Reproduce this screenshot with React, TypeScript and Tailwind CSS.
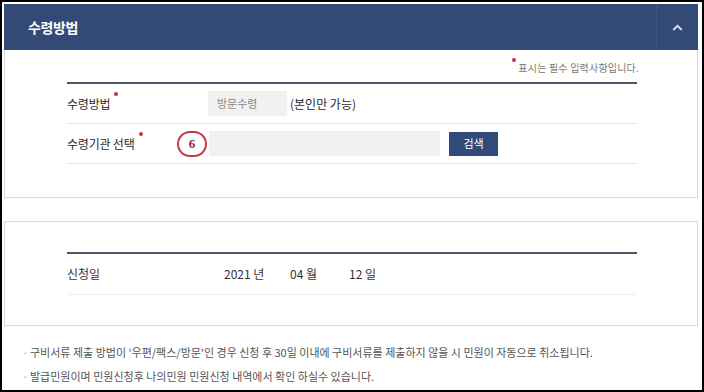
import React from 'react';

const FONT = "font-['Malgun_Gothic','Noto_Sans_CJK_KR',sans-serif]";

const Req = () => (
  <span className="absolute -top-[3px] -right-[8px] w-[4px] h-[4px] rounded-full bg-[#d02c3a]" />
);

const FieldRow = ({ label, children }: { label: string; children: React.ReactNode }) => (
  <div className="flex items-center h-[40px] border-b border-[#e6e6e6]">
    <div className="w-[110px] text-[12px] text-[#2a2a2a] tracking-[-0.2px]">
      <span className="relative">
        {label}
        <Req />
      </span>
    </div>
    {children}
  </div>
);

const App: React.FC = () => {
  return (
    <div className={`w-[704px] h-[392px] bg-white border-2 border-black p-[2px] pr-[4px] overflow-hidden ${FONT}`}>
      {/* 수령방법 패널 헤더 */}
      <div className="flex items-center h-[46px] bg-[#344a76]">
        <h2 className="flex-1 pl-[24px] text-[14px] font-bold text-white tracking-[-0.4px]">수령방법</h2>
        <button className="w-[42px] h-full border-l border-[#3f5684] flex items-center justify-center">
          <svg width="11" height="7" viewBox="0 0 11 7" fill="none">
            <path d="M1.2 6 L5.5 1.8 L9.8 6" stroke="#d5deee" strokeWidth="1.8" />
          </svg>
        </button>
      </div>

      <div className="h-[148px] border border-t-0 border-[#dadada] flex flex-col">
        <div className="h-[32px] flex items-center justify-end pr-[58px] pt-[2px] text-[10px] text-[#777] tracking-[0.2px]">
          <span className="relative">
            <span className="absolute -left-[6px] -top-[2px] w-[4px] h-[4px] rounded-full bg-[#d02c3a]" />
            표시는 필수 입력사항입니다.
          </span>
        </div>
        <div className="ml-[62px] w-[570px] border-t-2 border-[#4d5566]">
          <FieldRow label="수령방법">
            <div className="w-[79px] h-[25px] ml-[31px] bg-[#f1f1f1] text-[11px] text-[#888] flex items-center pl-[9px]">방문수령</div>
            <span className="ml-[3px] text-[12px] text-[#2a2a2a]">(본인만 가능)</span>
          </FieldRow>
          <FieldRow label="수령기관 선택">
            <div className="w-[30px] h-[26px] rounded-full border-2 border-[#c63a46] flex items-center justify-center text-[13px] font-bold text-[#8a2a32] font-['Liberation_Serif',serif]">6</div>
            <div className="w-[231px] h-[25px] ml-[2px] bg-[#f1f1f1]" />
            <button className="ml-[9px] w-[49px] h-[24px] bg-[#2f4a7b] text-white text-[11px]">검색</button>
          </FieldRow>
        </div>
      </div>

      {/* 신청일 */}
      <div className="mt-[23px] h-[105px] border border-[#dadada] pt-[30px]">
        <div className="ml-[62px] w-[570px] border-t-2 border-[#4d5566]">
          <div className="flex items-center h-[41px] border-b border-[#eeeeee] text-[12px] text-[#333]">
            <div className="w-[157px]">신청일</div>
            <span className="w-[66px]">2021 년</span>
            <span className="w-[59px]">04 월</span>
            <span>12 일</span>
          </div>
        </div>
      </div>

      <ul className="mt-[14px] pl-[18px] text-[11px] text-[#555] leading-[24px]">
        <li className="flex"><span className="w-[8px] text-[#aaa]">·</span>구비서류 제출 방법이 '우편/팩스/방문'인 경우 신청 후 30일 이내에 구비서류를 제출하지 않을 시 민원이 자동으로 취소됩니다.</li>
        <li className="flex"><span className="w-[8px] text-[#aaa]">·</span>발급민원이며 민원신청후 나의민원 민원신청 내역에서 확인 하실수 있습니다.</li>
      </ul>
    </div>
  );
};

export default App;
